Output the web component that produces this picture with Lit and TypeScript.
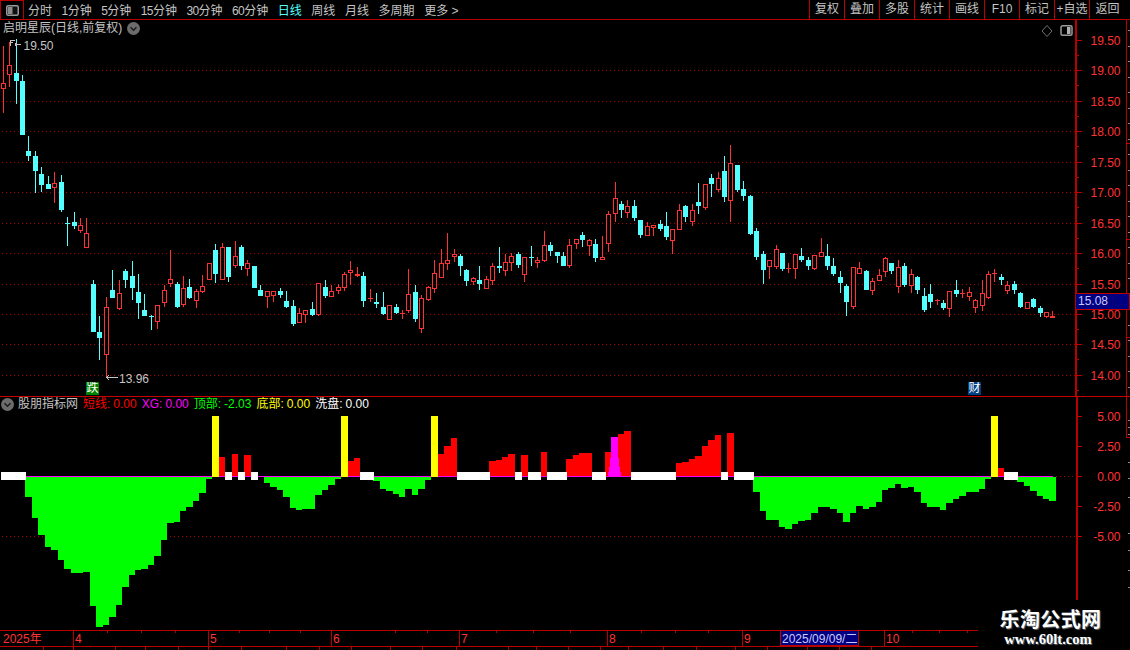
import { LitElement, html, css, svg } from "lit";
import { customElement } from "lit/decorators.js";

const RED = "#ff3232";
const CYAN = "#54ffff";
const LINE = "#b80000";
const xAt = (i: number) => Math.floor(3.2 + 6.44 * i);
const py = (z: number) => Math.round(130 + z / 3);
const iy = (z: number) => Math.round(390 + z / 3);

// kind (1 red, 0 cyan), high, body top, body bottom, low – in units of a third of a pixel from y=130
const K: number[][] = [
  [1,-252,-140,-122,-52],[1,-265,-194,-164,-130],[0,-272,-171,-148,-79],[0,-165,-147,15,15],
  [0,18,63,78,93],[0,63,78,123,189],[0,111,132,165,186],[0,138,162,177,177],[1,126,160,173,219],[0,135,156,240,246],
  [0,262,279,282,348],[0,246,276,288,297],[1,264,286,302,309],[1,264,310,353,353],[0,450,462,606,606],[0,558,606,624,690],
  [1,502,532,674,740],[0,420,480,504,504],[1,450,490,537,540],[0,417,423,450,474],[0,393,438,474,510],[0,432,486,519,567],
  [0,492,540,558,558],[0,555,558,561,600],[1,526,526,575,597],[1,465,480,518,531],[1,360,448,461,471],[0,456,462,531,534],
  [1,438,475,525,531],[0,447,471,504,507],[1,477,484,512,534],[1,435,469,486,489],[1,400,400,449,449],[0,342,360,432,459],
  [1,339,351,449,449],[0,351,351,441,456],[1,333,379,407,414],[0,345,351,408,420],[1,390,400,416,438],[0,408,408,474,474],
  [0,465,480,498,498],[1,484,484,500,534],[1,484,484,497,516],[0,474,483,495,504],[0,483,513,531,534],[0,510,528,582,588],
  [1,534,550,578,579],[1,540,541,554,579],[0,516,537,555,558],[1,460,460,554,558],[0,450,471,498,504],[1,465,484,500,500],
  [1,462,472,483,492],[1,426,433,473,483],[1,393,421,430,465],[1,411,433,437,441],[0,426,438,513,531],[1,477,505,508,516],
  [0,489,516,521,534],
  [0,486,531,552,555],[1,525,525,570,570],[0,522,531,549,552],[1,540,549,553,567],[1,417,492,543,549],[0,465,486,567,576],
  [1,495,504,597,609],[1,468,471,510,513],[1,390,430,476,489],[1,357,400,443,444],[1,309,390,401,420],[1,357,373,381,396],
  [0,372,378,408,438],[0,417,420,453,468],[1,441,445,456,465],[0,408,450,462,480],[1,438,447,476,477],[1,399,408,453,465],
  [0,351,408,414,429],[1,372,397,423,438],[1,369,379,398,423],[0,366,372,405,414],[1,381,381,434,456],[0,348,381,384,408],
  [1,381,390,398,414],[1,303,346,392,396],[0,336,345,363,378],[0,366,366,378,399],[0,366,378,408,408],[1,327,346,408,414],
  [1,328,328,341,357],[0,306,315,330,351],[1,328,331,347,378],[0,327,342,384,396],[1,318,382,389,390],[1,243,253,341,366],
  [1,156,205,253,276],[0,213,222,240,264],[1,210,229,248,264],[0,210,228,264,273],[0,270,270,315,324],[1,276,289,317,318],
  [1,286,286,293,318],[0,270,282,297,303],[0,246,288,321,330],[1,298,298,332,372],[1,222,241,299,300],[0,225,228,261,276],
  [1,222,241,275,288],[0,159,216,228,252],[1,163,163,233,240],[0,132,144,162,201],[1,126,145,179,186],[0,78,123,201,216],
  [1,45,100,212,276],[0,105,105,180,186],[0,153,177,198,213],[0,195,198,312,315],[0,294,303,381,390],
  [0,363,372,420,462],[1,391,391,411,447],[1,345,358,410,417],[0,369,369,417,423],[1,399,414,418,429],[1,372,373,418,447],
  [0,354,378,390,396],[0,381,390,408,420],[1,375,376,417,420],[1,324,367,382,382],[0,342,378,408,420],[0,384,408,432,438],
  [0,423,441,459,489],[0,462,468,516,558],[1,411,412,530,537],[1,396,415,431,432],[0,420,423,480,480],[1,444,454,483,495],
  [1,417,436,452,453],[1,381,385,425,441],[0,399,399,423,432],[1,390,412,470,489],[0,399,408,465,471],[1,417,433,467,489],
  [0,438,441,480,492],[0,474,498,540,546],[0,462,492,516,534],[1,507,510,514,525],[0,510,519,534,540],[1,484,484,536,561],
  [0,450,480,492,501],[1,477,489,493,504],[1,471,487,500,513],[1,507,511,533,549],[1,450,490,527,543],[1,423,433,505,506],
  [1,417,430,433,456],[0,432,441,450,465],[1,453,466,483,492],[0,453,462,480,492],[0,486,489,531,534],[1,517,517,536,537],
  [0,504,507,531,534],[0,528,534,549,561],[1,547,547,560,564],[1,543,559,563,564],
];

const BARS = (
  "w w w w g321 g384 g435 g471 g480 g510 g537 g549 g549 g546 g648 g711 g705 g681 g645 g591 g555 g540 g537 g525 g498 g450 g399 g396 g363 g351 g333 g309 g267 " +
  "y r201 w r192 w r195 w n g279 g291 g300 g321 g354 g360 g357 g357 g315 g300 g285 g267 y r213 r204 w w g273 " +
  "g297 g303 g312 g321 g297 g315 g297 g270 y r192 r168 r144 w w w w w r213 r210 r201 r192 w r195 w w r186 w w w r207 r195 r189 r189 w w r186 m141 r132 r123 " +
  "w w w w w w w r219 r216 r207 r198 r168 r150 r135 w r129 w w w " +
  "g306 g363 g390 g390 g411 g417 g402 g393 g390 g369 g351 g351 g357 g369 g396 g369 g348 g357 g351 g336 g300 g294 g282 g294 g291 g306 g339 g351 g351 g360 g339 g327 g318 g306 g306 g297 g267 " +
  "y r234 w w g276 g288 g303 g318 g327 g333"
).split(" ");

const PRICES: [string, number, boolean][] = [
  ["19.50", 40, false], ["19.00", 70, true], ["18.50", 101, true], ["18.00", 131, true], ["17.50", 162, true],
  ["17.00", 192, true], ["16.50", 223, true], ["16.00", 253, true], ["15.50", 284, true], ["15.00", 314, true],
  ["14.50", 344, true], ["14.00", 375, true],
];
const LOWER: [string, number][] = [["5.00", 417], ["2.50", 447], ["0.00", 477], ["-2.50", 507], ["-5.00", 537]];
const NAV: [string, string][] = [
  ["", "分时"], ["1", "分钟"], ["5", "分钟"], ["15", "分钟"], ["30", "分钟"], ["60", "分钟"],
  ["", "日线"], ["", "周线"], ["", "月线"], ["", "多周期"], ["", "更多 >"],
];
const TOOLS = ["复权", "叠加", "多股", "统计", "画线", "F10", "标记", "+自选", "返回"];
const LEGEND: [string, string, string][] = [
  ["短线:", "0.00", "red"], ["XG:", "0.00", "mag"], ["顶部:", "-2.03", "grn"], ["底部:", "0.00", "yel"], ["洗盘:", "0.00", "wht"],
];
const MONTHS: [string, number][] = [["4", 73], ["5", 208], ["6", 331], ["7", 459], ["8", 607], ["9", 742], ["10", 884]];
const MINOR = [107, 141, 175, 239, 269, 300, 395, 427, 496, 533, 570, 641, 675, 708, 912, 939, 967];
const LOWTICK = [43, 73, 115, 145, 178, 208, 241, 286, 319, 351, 390, 422, 456, 508, 536, 568, 600, 628, 663, 696, 735, 767, 807, 839, 871];

const chevron = html`<svg class="chev" width="13" height="13" viewBox="0 0 13 13">
  <circle cx="6.5" cy="6.5" r="6.5" fill="#6c6c6c"></circle>
  <path d="M3.5 5.2 6.5 8.2 9.5 5.2" fill="none" stroke="#1c1c1c" stroke-width="1.5"></path>
</svg>`;

@customElement("app-root")
export class AppRoot extends LitElement {
  static styles = css`
    :host {
      display: block; position: relative; width: 1130px; height: 650px; background: #000; overflow: hidden;
      font-family: "Liberation Sans", "Noto Sans CJK SC", sans-serif; font-size: 12px; color: #c4c4c4;
    }
    svg { display: block; }
    .chart { position: absolute; inset: 0; shape-rendering: crispEdges; }
    .chart text { font-family: "Liberation Sans", "Noto Sans CJK SC", sans-serif; font-size: 12px; }
    .dot { stroke: #a80000; stroke-dasharray: 1 3; shape-rendering: geometricPrecision; }
    .toolbar { display: flex; align-items: center; height: 19px; border-bottom: 1px solid #b80000; }
    .logo {
      box-sizing: border-box; width: 24px; height: 19px; display: flex; align-items: center; justify-content: center;
      border-left: 1px solid #b80000; border-right: 1px solid #b80000; border-top: 1px solid #b80000;
    }
    .nav { display: flex; gap: 9.6px; padding-left: 4px; flex: 1; white-space: nowrap; }
    .nav .on { color: #54ffff; }
    .d { letter-spacing: -0.67px; }
    .tools { display: flex; height: 19px; }
    .tools span {
      box-sizing: border-box; width: 35px; height: 19px; line-height: 19px; text-align: center; border-left: 1px solid #b80000;
    }
    .tools span:last-child { width: 41px; padding-right: 5px; }
    .pane { position: relative; box-sizing: border-box; }
    .price { height: 377px; border-bottom: 1px solid #c80000; }
    .indicator { height: 233px; }
    .head { position: relative; display: flex; align-items: center; white-space: nowrap; line-height: 15px; }
    .price .head { padding: 1px 0 0 3px; height: 15px; }
    .indicator .head { padding: 0 0 0 1px; height: 15px; }
    .chev { margin-left: 5px; }
    .indicator .chev { margin: 0 4px 0 0; }
    .name { margin-right: 5px; }
    .item { display: flex; align-items: baseline; gap: 3px; margin-right: 5px; }
    .red { color: #ff0000; } .mag { color: #ff00ff; } .grn { color: #00ff00; } .yel { color: #ffff00; } .wht { color: #fff; }
    .side { position: absolute; top: 4px; left: 1041px; }
    .time { position: relative; height: 20px; }
    .mark { position: absolute; top: 362px; width: 13px; height: 13px; line-height: 13px; text-align: center; color: #fff; font-size: 12px; overflow: hidden; }
    .fall { left: 86px; background: #008000; }
    .fin { left: 968px; background: #004080; }
    .badge {
      position: absolute; box-sizing: border-box; left: 1075px; top: 293px; width: 55px; height: 17px; line-height: 15px;
      padding-left: 2px; background: #000080; border: 1px solid #c00000; color: #c8c8ff; font-size: 12px;
    }
    .wm {
      position: absolute; left: 978px; top: 600px; width: 152px; height: 50px; background: #000; display: flex; flex-direction: column; align-items: center; color: #fff;
    }
    .wm b { font-family: "Noto Sans CJK SC", sans-serif; font-weight: 700; font-size: 20px; line-height: 26px; margin-top: 6px; letter-spacing: .4px; margin-left: -7px; text-shadow: 1px 1px 1px #666; }
    .wm i { font-family: "Liberation Serif", serif; font-style: normal; font-weight: 700; font-size: 14.6px; line-height: 15px; margin-left: -12px; text-shadow: 1px 1px 1px #666; }
  `;

  private dots(x1: number, x2: number, y: number) {
    return svg`<line class="dot" x1=${x1} x2=${x2} y1=${y + 0.5} y2=${y + 0.5}></line>`;
  }

  private candles() {
    return K.map((k, i) => {
      const x = xAt(i);
      const [r, hi, t, b, lo] = k;
      const c = r ? RED : CYAN;
      const Y1 = py(hi), T = py(t), B = Math.max(py(b), T + 1), L = py(lo);
      const wick = svg`<rect x=${x} y=${Y1} width="1" height=${Math.max(L - Y1, 1)} fill=${c}></rect>`;
      const body = r && B - T >= 3
        ? svg`<rect x=${x - 2 + 0.5} y=${T + 0.5} width="4" height=${B - T - 1} fill="#000" stroke=${c}></rect>`
        : svg`<rect x=${x - 2} y=${T} width="5" height=${B - T} fill=${c}></rect>`;
      return svg`${wick}${body}`;
    });
  }

  private bars() {
    const base: unknown[] = [];
    const over: unknown[] = [];
    BARS.forEach((b, i) => {
      const x = xAt(i) - 3;
      const w = xAt(i + 1) - xAt(i);
      const v = Number(b.slice(1));
      if (b[0] === "g") base.push(svg`<rect x=${x} y="477" width=${w} height=${iy(v) - 477} fill="#00ff00"></rect>`);
      if (b[0] === "r") base.push(svg`<rect x=${x} y=${iy(v)} width=${w} height=${477 - iy(v)} fill="#ff0000"></rect>`);
      if (b[0] === "w") over.push(svg`<rect x=${Math.max(x, 1)} y="472" width="7" height="8" fill="#fff"></rect>`);
      if (b[0] === "y") over.push(svg`<rect x=${x} y="416" width="7" height="61" fill="#ffff00"></rect>`);
      if (b[0] === "m") over.push(svg`<rect x="611" y=${iy(v)} width="7" height=${477 - iy(v)} fill="#ff00ff"></rect>
        <rect x="610" y="458" width="9" height="19" fill="#ff00ff"></rect>
        <rect x="609" y="467" width="1" height="10" fill="#ff00ff"></rect><rect x="619" y="467" width="1" height="10" fill="#ff00ff"></rect>
        <rect x="608" y="472" width="1" height="5" fill="#ff00ff"></rect><rect x="620" y="472" width="1" height="5" fill="#ff00ff"></rect>`);
    });
    return svg`${base}<rect x="25" y="476" width="1028" height="1" fill="#ff00ff"></rect>${over}`;
  }

  render() {
    return html`
      <header class="toolbar">
        <div class="logo">
          <svg width="13" height="11" viewBox="0 0 13 11">
            <rect x="0.75" y="0.75" width="11.5" height="9.5" rx="1.5" fill="#101010" stroke="#9a9a9a" stroke-width="1.5"></rect>
            <rect x="2" y="2" width="4.5" height="7" fill="#8c8c8c"></rect>
          </svg>
        </div>
        <nav class="nav">
          ${NAV.map((n) => html`<span class=${n[1] === "日线" ? "on" : ""}><span class="d">${n[0]}</span>${n[1]}</span>`)}
        </nav>
        <div class="tools">${TOOLS.map((t) => html`<span>${t}</span>`)}</div>
      </header>

      <section class="pane price">
        <svg class="chart" width="1130" height="376" viewBox="0 20 1130 376">
          ${PRICES.filter((p) => p[2]).map((p) => this.dots(2, 1075, p[1]))}
          ${this.candles()}
          <rect x="1075" y="20" width="2" height="376" fill=${LINE}></rect>
          <rect x="1126" y="20" width="1" height="376" fill=${LINE}></rect>
          ${PRICES.map((p) => svg`
            <rect x="1076" y=${p[1]} width="6" height="1" fill=${LINE}></rect>
            <rect x="1076" y=${p[1] + 15} width="3" height="1" fill=${LINE}></rect>
            <text x="1120.5" y=${p[1] + 5} text-anchor="end" fill=${RED}>${p[0]}</text>`)}
          ${[143, 239, 337].map((y) => svg`<rect x="1126" y=${y} width="4" height="1" fill=${LINE}></rect>`)}
          ${Array.from({ length: 24 }, (_, i) => svg`<rect x="1128" y=${30 + i * 15.5} width="2" height="1" fill="#8a8a8a"></rect>`)}
          <path d="M10.5 46V40.5H15M10.5 42.5H13" fill="none" stroke="#c4c4c4"></path>
          <path d="M15 44.5H21M15 44.5l2-1.5M15 44.5l2 1.5" fill="none" stroke="#c4c4c4"></path>
          <text x="23.5" y="50" fill="#c4c4c4">19.50</text>
          <path d="M106 377.5H118M106 377.5l3-2M106 377.5l3 2" fill="none" stroke="#c4c4c4"></path>
          <text x="119" y="383" fill="#c4c4c4">13.96</text>
        </svg>
        <div class="head">
          <span>启明星辰(日线,前复权)</span>${chevron}
          <svg class="side" width="32" height="14" viewBox="0 0 32 14">
            <path d="M6 1.5 11 7 6 12.5 1 7Z" fill="none" stroke="#707070"></path>
            <rect x="20" y="1.75" width="11" height="9.5" rx="1.5" fill="#000" stroke="#9a9a9a" stroke-width="1.5"></rect>
            <rect x="26" y="3" width="3.5" height="7" fill="#b0b0b0"></rect>
          </svg>
        </div>
        <div class="mark fall">跌</div>
        <div class="mark fin">财</div>
      </section>
      <div class="badge">15.08</div>

      <section class="pane indicator">
        <svg class="chart" width="1130" height="233" viewBox="0 397 1130 233">
          ${this.dots(2, 1076, 536)}
          ${this.dots(1056, 1076, 476)}
          ${this.bars()}
          <rect x="1076" y="397" width="2" height="203" fill=${LINE}></rect>
          ${LOWER.map((l) => svg`
            <rect x="1077" y=${l[1] - 1} width="5" height="1" fill=${LINE}></rect>
            <text x="1120.5" y=${l[1] + 4} text-anchor="end" fill=${RED}>${l[0]}</text>`)}
          <rect x="1126" y="397" width="1" height="40" fill=${LINE}></rect>
          <rect x="1126" y="437" width="4" height="1" fill=${LINE}></rect>
          ${[420, 427, 434, 462, 478, 497, 533, 550, 570, 587].map((y) => svg`<rect x="1128" y=${y} width="2" height="1" fill="#8a8a8a"></rect>`)}
        </svg>
        <div class="head">
          ${chevron}<span class="name">股朋指标网</span>
          ${LEGEND.map((l) => html`<span class="item ${l[2]}"><span>${l[0]}</span><span>${l[1]}</span></span>`)}
        </div>
      </section>

      <section class="time">
        <svg class="chart" width="1130" height="20" viewBox="0 630 1130 20">
          <rect x="0" y="630" width="978" height="1" fill=${LINE}></rect>
          <rect x="0" y="646" width="978" height="1" fill=${LINE}></rect>
          <text x="3" y="642.5" fill=${RED}>2025年</text>
          ${MONTHS.map((m) => svg`
            <rect x=${m[1]} y="630" width="1" height="16" fill=${LINE}></rect>
            <text x=${m[1] + 2} y="642.5" fill=${RED}>${m[0]}</text>`)}
          ${MINOR.map((x) => svg`<rect x=${x} y="631" width="1" height="2" fill=${LINE}></rect>`)}
          ${LOWTICK.map((x) => svg`<rect x=${x} y="647" width="1" height="3" fill=${LINE}></rect>`)}
          <rect x="780.5" y="630.5" width="78" height="15" fill="#000080" stroke=${LINE}></rect>
          <text x="782" y="642.5" fill="#c8c8ff">2025/09/09/二</text>
        </svg>
      </section>

      <aside class="wm"><b>乐淘公式网</b><i>www.60lt.com</i></aside>
    `;
  }
}
